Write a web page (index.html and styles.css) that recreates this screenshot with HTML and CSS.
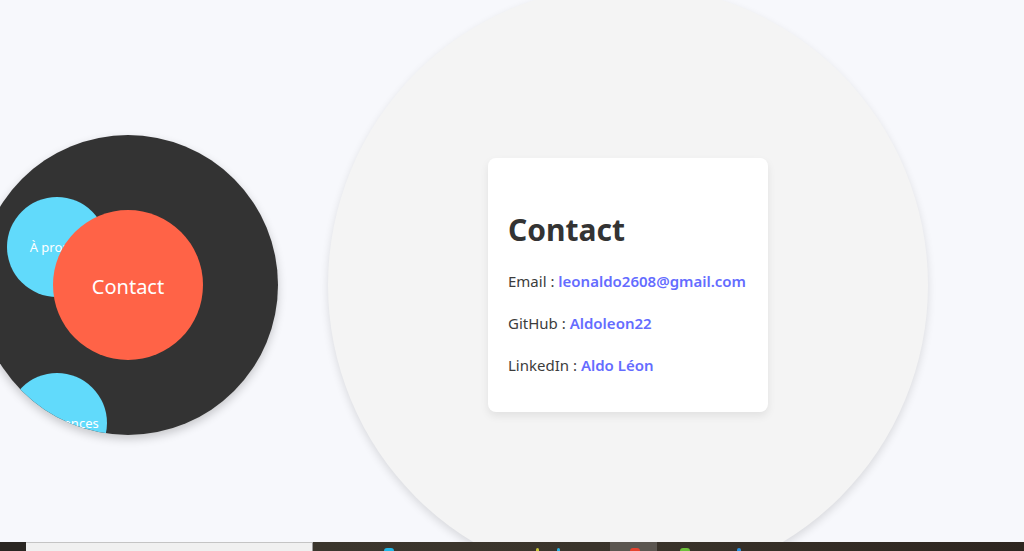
FILE: index.html
```html
<!DOCTYPE html>
<html lang="fr">
<head>
<meta charset="utf-8">
<title>Contact</title>
<link rel="stylesheet" href="styles.css">
</head>
<body>
<main class="stage">
  <nav class="orbit">
    <a class="bubble bubble-about" href="#">À propos</a>
    <a class="bubble bubble-skills" href="#">Compétences</a>
    <a class="bubble bubble-active" href="#">Contact</a>
  </nav>
  <section class="planet">
    <div class="card">
      <h2 class="card-title">Contact</h2>
      <p class="card-line">Email : <a class="card-link" href="#">leonaldo2608@gmail.com</a></p>
      <p class="card-line">GitHub : <a class="card-link" href="#">Aldoleon22</a></p>
      <p class="card-line">LinkedIn : <a class="card-link" href="#">Aldo Léon</a></p>
    </div>
  </section>
</main>
<footer class="taskbar">
  <div class="tb-start"></div>
  <div class="tb-search"></div>
  <div class="tb-apps">
    <span class="tb-icon tb-cyan tb-a"></span>
    <span class="tb-icon tb-yellow tb-b"></span>
    <span class="tb-icon tb-cyan2 tb-c"></span>
    <span class="tb-active"><span class="tb-icon tb-red"></span></span>
    <span class="tb-icon tb-green tb-d"></span>
    <span class="tb-icon tb-blue tb-e"></span>
  </div>
</footer>
</body>
</html>
```
FILE: styles.css
```css
* { box-sizing: border-box; }

html, body {
  margin: 0;
  height: 551px;
  overflow: hidden;
}

body {
  background: #f7f8fc;
  font-family: "Noto Sans", "Open Sans", sans-serif;
  color: #333;
  display: flex;
  flex-direction: column;
}

.stage {
  flex: none;
  height: 542px;
  padding-top: 28px;
  display: flex;
  align-items: center;
  gap: 50px;
}

.orbit {
  flex: none;
  position: relative;
  width: 300px;
  height: 300px;
  margin-left: -22px;
  border-radius: 50%;
  background: #333333;
  overflow: hidden;
  box-shadow: 0 4px 10px rgba(0, 0, 0, 0.2);
}

.bubble {
  position: absolute;
  display: flex;
  align-items: center;
  justify-content: center;
  border-radius: 50%;
  color: #fff;
  text-decoration: none;
  white-space: nowrap;
}

.bubble-about,
.bubble-skills {
  width: 100px;
  height: 100px;
  background: #61dafb;
  font-size: 13px;
}

.bubble-about { left: 29px; top: 62px; }
.bubble-skills { left: 29px; top: 238px; }

.bubble-active {
  left: 75px;
  top: 75px;
  width: 150px;
  height: 150px;
  background: #ff6347;
  font-size: 20px;
  padding-top: 2px;
}

.planet {
  flex: none;
  width: 600px;
  height: 600px;
  border-radius: 50%;
  background: #f4f4f4;
  box-shadow: 0 4px 8px rgba(0, 0, 0, 0.12);
  display: flex;
  align-items: center;
  justify-content: center;
}

.card {
  width: 280px;
  height: 254px;
  background: #fff;
  border-radius: 8px;
  padding: 20px;
  box-shadow: 0 4px 8px rgba(0, 0, 0, 0.08);
}

.card-title {
  margin: 32px 0 19px;
  font-size: 30px;
  line-height: 40px;
  font-weight: 700;
  color: #333;
}

.card-line {
  margin: 0 0 16px;
  font-size: 15px;
  line-height: 25.8px;
  color: #3c3c3c;
}

.card-link {
  color: #646cff;
  font-weight: 600;
  text-decoration: none;
}

.taskbar {
  position: relative;
  z-index: 2;
  flex: none;
  height: 9px;
  display: flex;
  background: #2b2621;
}

.tb-start { width: 26px; background: #2a2622; }

.tb-search {
  width: 287px;
  background: #f0f0f0;
  border-top: 1px solid #c4c4c4;
  border-right: 1px solid #9a9a9a;
}

.tb-apps {
  flex: 1;
  position: relative;
  background: linear-gradient(90deg, #3b362d 0%, #3a342b 40%, #2e2620 100%);
}

.tb-active {
  position: absolute;
  left: 297px;
  top: 0;
  width: 47px;
  height: 9px;
  background: #5b5650;
}

.tb-icon {
  position: absolute;
  bottom: 0;
  width: 10px;
  height: 3px;
  border-radius: 5px 5px 0 0;
}

.tb-cyan { background: #1fb6e6; }
.tb-yellow { background: #c9c43a; width: 3px; }
.tb-cyan2 { background: #2ab0e0; width: 3px; }
.tb-red { background: #e5422f; left: 20px; }
.tb-green { background: #6cbf3a; }
.tb-blue { background: #2a8fe0; width: 4px; }

.tb-a { left: 71px; }
.tb-b { left: 223px; }
.tb-c { left: 244px; }
.tb-d { left: 367px; }
.tb-e { left: 424px; }
```
